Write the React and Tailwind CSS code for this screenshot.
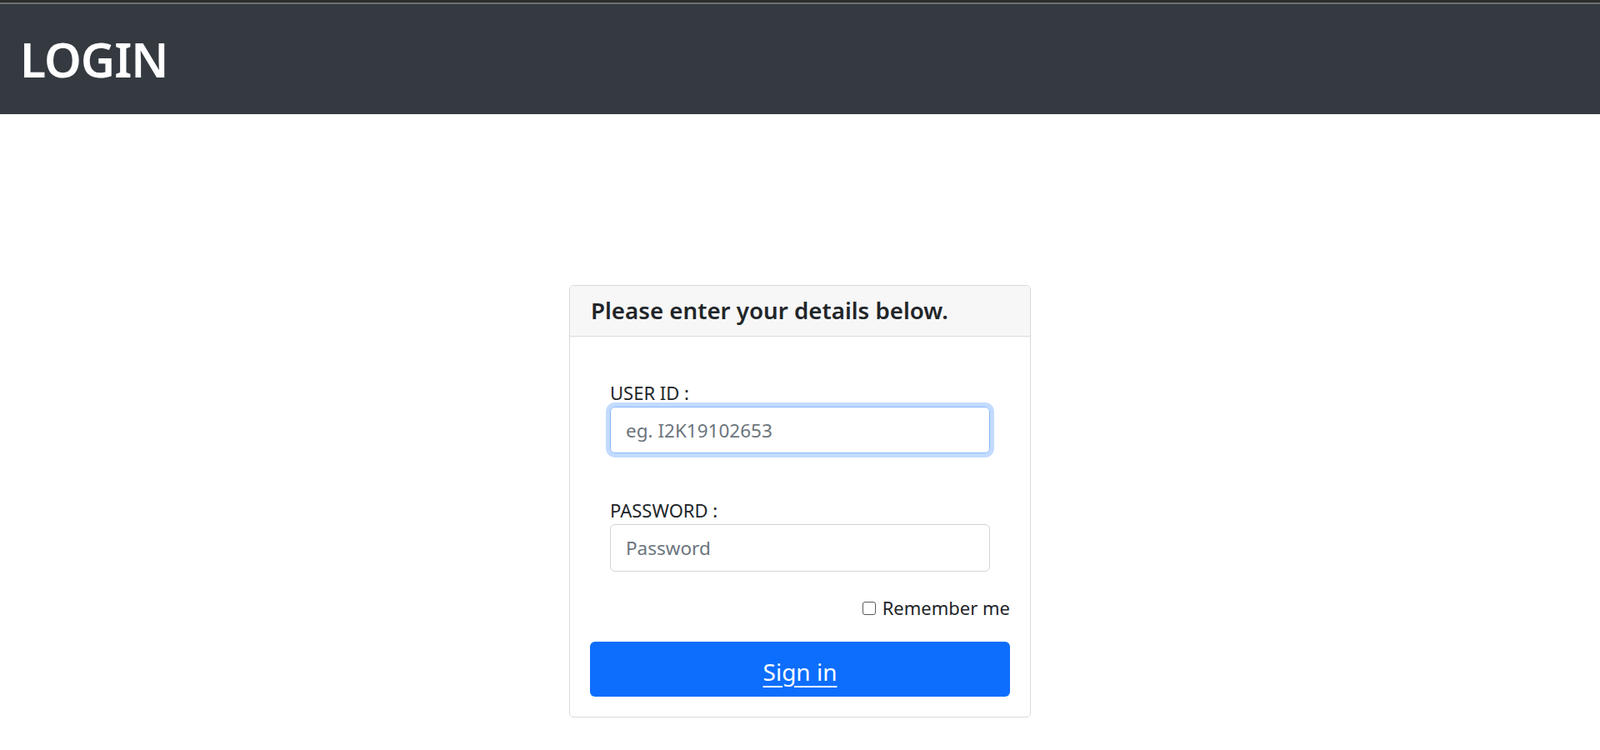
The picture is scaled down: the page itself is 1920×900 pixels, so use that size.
export default function App() {
  return (
    <div className="min-h-screen bg-white font-['Noto_Sans',sans-serif] text-[#212529]">
      {/* window top strip */}
      <div className="h-[3px] bg-[#2b2b2b]" />
      <div className="h-[2px] bg-[#6b6e73]" />

      <header className="h-[132px] bg-[#343a40] flex items-center px-[24px]">
        <h1 className="text-[57px] font-semibold text-white tracking-[-1px] leading-none">LOGIN</h1>
      </header>

      <main className="flex justify-center pt-[205px]">
        <div className="w-[554px] border border-[#dadada] rounded-[5px] overflow-hidden">
          <div className="h-[61px] bg-[#f7f7f7] border-b border-[#dadada] flex items-center px-[25px]">
            <h4 className="text-[27.7px] font-semibold leading-none">Please enter your details below.</h4>
          </div>

          <div className="p-[24px]">
            <div className="px-[24px] pt-[27px]">
              <label className="block text-[22px] leading-[33px]">USER ID :</label>
              <input
                type="text"
                placeholder="eg. I2K19102653"
                className="block w-full h-[56px] rounded-[6px] border border-[#86b7fe] px-[18px] text-[22.5px] text-[#212529] placeholder:text-[#6c757d] outline-none ring-[5px] ring-[#0d6efd]/25"
              />

              <label className="block text-[22px] leading-[33px] mt-[52px]">PASSWORD :</label>
              <input
                type="password"
                placeholder="Password"
                className="block w-full h-[57px] rounded-[6px] border border-[#ced4da] px-[18px] text-[22.5px] text-[#212529] placeholder:text-[#6c757d] outline-none"
              />
            </div>

            <div className="flex justify-end items-center mt-[27px] h-[33px]">
              <span className="w-[16px] h-[16px] border border-[#5a5a5a] rounded-[3px] mr-[8px]" />
              <span className="text-[22px] leading-[33px]">Remember me</span>
            </div>

            <a
              href="#"
              className="mt-[24px] flex items-center justify-center h-[66px] pt-[5px] rounded-[6px] bg-[#0d6efd] text-white text-[28px] underline underline-offset-[6px]"
            >
              Sign in
            </a>
          </div>
        </div>
      </main>
    </div>
  )
}
